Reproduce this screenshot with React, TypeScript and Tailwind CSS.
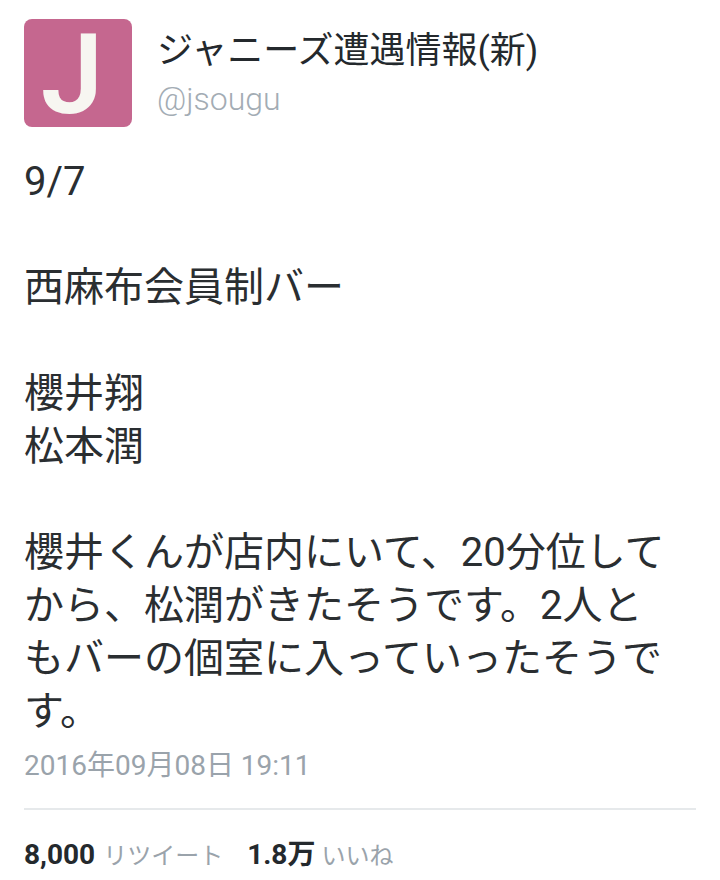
import React from "react";

const font = { fontFamily: '"Roboto", "Noto Sans CJK JP", sans-serif' };

export default function App() {
  return (
    <div className="w-[720px] h-[880px] bg-white overflow-hidden" style={font}>
      <div className="flex pl-6 pt-[19px]">
        <div className="w-[108px] h-[108px] rounded-[8px] bg-[#c5678f] flex items-center justify-center pr-[12px] pt-[4px]">
          <span className="text-[#f7f6f1] text-[112px] font-semibold leading-none" style={{ fontFamily: '"Roboto", sans-serif' }}>J</span>
        </div>
        <div className="ml-[25px] pt-[10px] flex flex-col">
          <div className="text-[36px] leading-[44px] text-[#24292d]">ジャニーズ遭遇情報(新)</div>
          <div className="text-[32px] leading-[40px] mt-[6px] text-[#a3acb4] font-light">@jsougu</div>
        </div>
      </div>

      <div className="pl-6 mt-[28px] text-[40px] leading-[53px] text-[#2a2e31] whitespace-nowrap">
        <div>9/7</div>
        <div>&nbsp;</div>
        <div>西麻布会員制バー</div>
        <div>&nbsp;</div>
        <div>櫻井翔</div>
        <div>松本潤</div>
        <div>&nbsp;</div>
        <div>櫻井くんが店内にいて、20分位して</div>
        <div>から、松潤がきたそうです。2人と</div>
        <div>もバーの個室に入っていったそうで</div>
        <div>す。</div>
      </div>

      <div className="pl-6 mt-[10px] text-[28px] leading-[36px] text-[#9aa3ab]">2016年09月08日 19:11</div>

      <div className="mx-6 mt-[24px] h-[2px] bg-[#e6e9eb]" />

      <div className="pl-6 mt-[27px] flex items-baseline leading-[36px]">
        <span className="text-[28px] font-bold text-[#24292d]">8,000</span>
        <span className="ml-[8px] text-[24px] text-[#9aa3ab]">リツイート</span>
        <span className="ml-[24px] text-[28px] font-bold text-[#24292d]">1.8万</span>
        <span className="ml-[6px] text-[24px] text-[#9aa3ab]">いいね</span>
      </div>
    </div>
  );
}
